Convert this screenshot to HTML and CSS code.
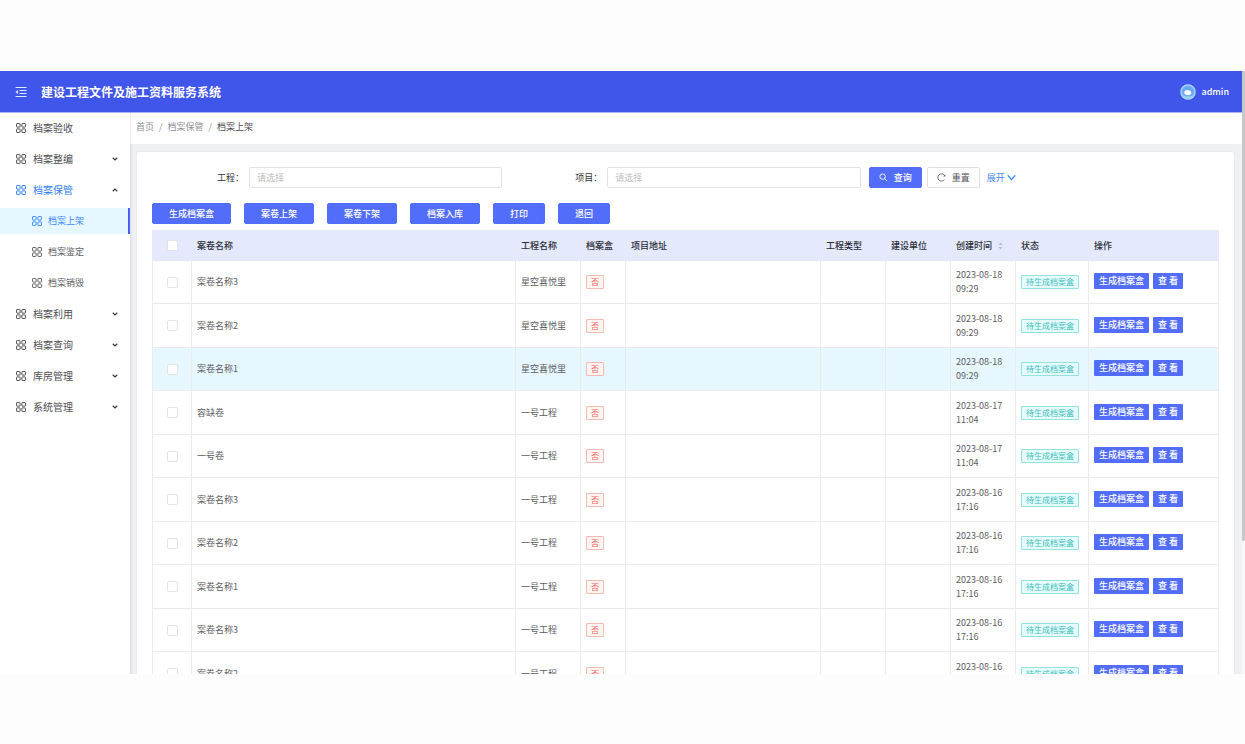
FILE: index.html
```html
<!DOCTYPE html>
<html lang="zh-CN">
<head>
<meta charset="utf-8">
<meta name="viewport" content="width=device-width, initial-scale=1">
<title>建设工程文件及施工资料服务系统</title>
<link rel="stylesheet" href="styles.css">
</head>
<body>
<svg class="defs" aria-hidden="true">
  <symbol id="grid" viewBox="0 0 18 18"><g fill="none" stroke="currentColor" stroke-width="1.8"><rect x="1" y="1" width="6.4" height="6.4" rx="1"/><rect x="10.6" y="1" width="6.4" height="6.4" rx="1"/><rect x="1" y="10.6" width="6.4" height="6.4" rx="1"/><rect x="10.6" y="10.6" width="6.4" height="6.4" rx="1"/></g></symbol>
  <symbol id="chev" viewBox="0 0 12 12"><path d="M1.5 3.5 6 8l4.500-4.500" fill="none" stroke="currentColor" stroke-width="2.200"/></symbol>
</svg>
<div class="app">
  <div class="view">
    <header class="top">
      <button class="fold" type="button" aria-label="收起菜单"><svg viewBox="0 0 24 24"><path d="M1 3h22M9 9h14M9 15h14M1 21h22" fill="none" stroke="currentColor" stroke-width="2"/><path d="M1 12l5-4v8z" fill="currentColor"/></svg></button>
      <h1 class="brand">建设工程文件及施工资料服务系统</h1>
      <a class="user" href="#"><svg viewBox="0 0 32 32"><circle cx="16" cy="16" r="15.500" fill="#b5dcf8"/><circle cx="16" cy="16" r="13" fill="#6ba9f3"/><path d="M5 22a13 13 0 0 0 22 0c-6 4-16 4-22 0z" fill="#a5dcee"/><path d="M8.500 17c0-3 2.500-5 6-5s8 1.500 8 6c0 3-3 4.500-7 4.500s-7-2-7-5.500z" fill="#fff"/></svg><span>admin</span></a>
    </header>
    <div class="body">
      <nav class="side">
        <a class="item" href="#"><svg class="ico"><use href="#grid"/></svg>档案验收</a>
        <a class="item" href="#"><svg class="ico"><use href="#grid"/></svg>档案整编<svg class="arrow"><use href="#chev"/></svg></a>
        <a class="item open" href="#"><svg class="ico"><use href="#grid"/></svg>档案保管<svg class="arrow up"><use href="#chev"/></svg></a>
        <a class="item sub active" href="#"><svg class="ico"><use href="#grid"/></svg>档案上架</a>
        <a class="item sub" href="#"><svg class="ico"><use href="#grid"/></svg>档案鉴定</a>
        <a class="item sub" href="#"><svg class="ico"><use href="#grid"/></svg>档案销毁</a>
        <a class="item" href="#"><svg class="ico"><use href="#grid"/></svg>档案利用<svg class="arrow"><use href="#chev"/></svg></a>
        <a class="item" href="#"><svg class="ico"><use href="#grid"/></svg>档案查询<svg class="arrow"><use href="#chev"/></svg></a>
        <a class="item" href="#"><svg class="ico"><use href="#grid"/></svg>库房管理<svg class="arrow"><use href="#chev"/></svg></a>
        <a class="item" href="#"><svg class="ico"><use href="#grid"/></svg>系统管理<svg class="arrow"><use href="#chev"/></svg></a>
      </nav>
      <main class="main">
        <div class="crumbs"><a href="#">首页</a><span>/</span><a href="#">档案保管</a><span>/</span><b>档案上架</b></div>
        <section class="card">
          <form class="search">
            <div class="field"><label for="f1">工程：</label><input id="f1" type="text" placeholder="请选择"></div>
            <div class="field"><label for="f2">项目：</label><input id="f2" type="text" placeholder="请选择"></div>
            <div class="ops">
              <button class="btn primary" type="button"><svg viewBox="0 0 20 20"><path d="M12.500 12.500 18 18" stroke="currentColor" stroke-width="2"/><circle cx="8" cy="8" r="6" fill="none" stroke="currentColor" stroke-width="2"/></svg>查询</button>
              <button class="btn plain" type="button"><svg viewBox="0 0 20 20"><path d="M16.500 14.500A8 8 0 1 1 16.500 5.500" fill="none" stroke="currentColor" stroke-width="1.800"/><path d="M18.500 2.500v5h-5z" fill="currentColor"/></svg>重置</button>
              <a class="more" href="#">展开<svg viewBox="0 0 18 18"><path d="M1.500 4.500 9 13l7.500-8.500" fill="none" stroke="currentColor" stroke-width="2.400"/></svg></a>
            </div>
          </form>
          <div class="actions">
            <button class="btn primary" type="button">生成档案盒</button>
            <button class="btn primary" type="button">案卷上架</button>
            <button class="btn primary" type="button">案卷下架</button>
            <button class="btn primary" type="button">档案入库</button>
            <button class="btn primary" type="button">打印</button>
            <button class="btn primary" type="button">退回</button>
          </div>
          <table class="list">
            <colgroup><col class="w-check"><col><col class="w-m"><col class="w-box"><col class="w-addr"><col class="w-m"><col class="w-m"><col class="w-m"><col class="w-state"><col class="w-ops"></colgroup>
            <thead><tr><th class="ck"><input type="checkbox" aria-label="全选"></th><th>案卷名称</th><th>工程名称</th><th>档案盒</th><th>项目地址</th><th>工程类型</th><th>建设单位</th><th>创建时间<svg class="sort" viewBox="0 0 10 16"><path d="M5 1l4 5H1zM5 15l4-5H1z" fill="#b9bcc8"/></svg></th><th>状态</th><th>操作</th></tr></thead>
            <tbody>
              <tr><td class="ck"><input type="checkbox" aria-label="选择"></td><td>案卷名称3</td><td>星空喜悦里</td><td><span class="tag no">否</span></td><td></td><td></td><td></td><td>2023-08-18 09:29</td><td><span class="tag wait">待生成档案盒</span></td><td><div class="rowops"><button type="button">生成档案盒</button><button type="button">查 看</button></div></td></tr>
              <tr><td class="ck"><input type="checkbox" aria-label="选择"></td><td>案卷名称2</td><td>星空喜悦里</td><td><span class="tag no">否</span></td><td></td><td></td><td></td><td>2023-08-18 09:29</td><td><span class="tag wait">待生成档案盒</span></td><td><div class="rowops"><button type="button">生成档案盒</button><button type="button">查 看</button></div></td></tr>
              <tr class="hover"><td class="ck"><input type="checkbox" aria-label="选择"></td><td>案卷名称1</td><td>星空喜悦里</td><td><span class="tag no">否</span></td><td></td><td></td><td></td><td>2023-08-18 09:29</td><td><span class="tag wait">待生成档案盒</span></td><td><div class="rowops"><button type="button">生成档案盒</button><button type="button">查 看</button></div></td></tr>
              <tr><td class="ck"><input type="checkbox" aria-label="选择"></td><td>容缺卷</td><td>一号工程</td><td><span class="tag no">否</span></td><td></td><td></td><td></td><td>2023-08-17 11:04</td><td><span class="tag wait">待生成档案盒</span></td><td><div class="rowops"><button type="button">生成档案盒</button><button type="button">查 看</button></div></td></tr>
              <tr><td class="ck"><input type="checkbox" aria-label="选择"></td><td>一号卷</td><td>一号工程</td><td><span class="tag no">否</span></td><td></td><td></td><td></td><td>2023-08-17 11:04</td><td><span class="tag wait">待生成档案盒</span></td><td><div class="rowops"><button type="button">生成档案盒</button><button type="button">查 看</button></div></td></tr>
              <tr><td class="ck"><input type="checkbox" aria-label="选择"></td><td>案卷名称3</td><td>一号工程</td><td><span class="tag no">否</span></td><td></td><td></td><td></td><td>2023-08-16 17:16</td><td><span class="tag wait">待生成档案盒</span></td><td><div class="rowops"><button type="button">生成档案盒</button><button type="button">查 看</button></div></td></tr>
              <tr><td class="ck"><input type="checkbox" aria-label="选择"></td><td>案卷名称2</td><td>一号工程</td><td><span class="tag no">否</span></td><td></td><td></td><td></td><td>2023-08-16 17:16</td><td><span class="tag wait">待生成档案盒</span></td><td><div class="rowops"><button type="button">生成档案盒</button><button type="button">查 看</button></div></td></tr>
              <tr><td class="ck"><input type="checkbox" aria-label="选择"></td><td>案卷名称1</td><td>一号工程</td><td><span class="tag no">否</span></td><td></td><td></td><td></td><td>2023-08-16 17:16</td><td><span class="tag wait">待生成档案盒</span></td><td><div class="rowops"><button type="button">生成档案盒</button><button type="button">查 看</button></div></td></tr>
              <tr><td class="ck"><input type="checkbox" aria-label="选择"></td><td>案卷名称3</td><td>一号工程</td><td><span class="tag no">否</span></td><td></td><td></td><td></td><td>2023-08-16 17:16</td><td><span class="tag wait">待生成档案盒</span></td><td><div class="rowops"><button type="button">生成档案盒</button><button type="button">查 看</button></div></td></tr>
              <tr><td class="ck"><input type="checkbox" aria-label="选择"></td><td>案卷名称2</td><td>一号工程</td><td><span class="tag no">否</span></td><td></td><td></td><td></td><td>2023-08-16 17:16</td><td><span class="tag wait">待生成档案盒</span></td><td><div class="rowops"><button type="button">生成档案盒</button><button type="button">查 看</button></div></td></tr>
            </tbody>
          </table>
        </section>
      </main>
    </div>
  </div>
  <div class="track"><div class="thumb"></div></div>
</div>
</body>
</html>
```
FILE: styles.css
```css
* { box-sizing: border-box; }
body {
  margin: 0;
  height: 100vh;
  padding: 71px 0 70px;
  background: #fdfdfd;
  color: #5c5d62;
  font: 9px/14px "Noto Sans CJK SC", "Noto Sans", sans-serif;
}
a { color: inherit; text-decoration: none; }
button, input { font: inherit; }
svg { flex: none; }
.defs { display: none; }

.app { display: flex; height: 100%; overflow: hidden; background: #fff; }
.view { flex: 1; min-width: 0; display: flex; flex-direction: column; }
.track { width: 3px; background: #f7f7f7; }
.thumb { height: 78%; background: #c6c7c9; border-radius: 0 0 2px 2px; }

.top {
  flex: none;
  height: 41px;
  display: flex;
  align-items: center;
  padding: 1px 13px 0 15px;
  background: #4055ea;
  box-shadow: 0 1px 0 #a9b4f6;
  color: #fff;
  z-index: 1;
}
.fold { display: flex; padding: 0; border: 0; background: none; color: #e6eaff; }
.fold svg { width: 12px; height: 12px; }
.brand { margin: 0 auto 0 14px; font-size: 12px; line-height: 18px; font-weight: 700; }
.user { display: flex; align-items: center; gap: 5px; font-weight: 500; }
.user svg { width: 16px; height: 16px; }

.body { flex: 1; min-height: 0; display: flex; }
.side {
  flex: none;
  width: 130px;
  display: flex;
  flex-direction: column;
  gap: 5px;
  padding-top: 3px;
  background: #fff;
}
.item { display: flex; align-items: center; gap: 7px; height: 26px; padding: 0 12px 0 16px; font-size: 10px; color: #4c4d52; }
.ico { width: 10px; height: 10px; }
.arrow { width: 6px; height: 6px; margin-left: auto; color: #333; }
.up { transform: rotate(180deg); }
.open { color: #2f80f5; }
.open .arrow { color: #333; }
.sub { gap: 6px; padding-left: 32px; font-size: 9px; color: #606166; }
.active { background: #e6f7ff; color: #3f8bf8; border-right: 2px solid #4a5ff0; }

.main { flex: 1; min-width: 0; overflow: hidden; background: #eff1f5; box-shadow: inset 2px 0 2px #e2e4e9; }
.crumbs { display: flex; gap: 5px; height: 32px; padding: 8px 5px; background: #fff; border-left: 1px solid #f0f1f3; color: #8f9095; }
.crumbs b { font-weight: 400; color: #4c4d52; }
.card { margin: 7px 7px 0 6px; padding: 15px 15px 0; background: #fff; border: 1px solid #eaebee; border-radius: 3px; }

.search { display: grid; grid-template-columns: repeat(3, 1fr); gap: 8px; }
.field { display: flex; align-items: center; }
.field label { flex: none; width: 97px; padding-right: 5px; text-align: right; color: #333; }
.field input {
  flex: 1;
  min-width: 0;
  height: 21px;
  padding: 0 7px;
  border: 1px solid #e2e2e4;
  border-radius: 2px;
  background: #fff;
  outline: 0;
}
.field input::placeholder { color: #bdbdc0; opacity: 1; }
.ops { display: flex; align-items: center; gap: 5px; }
.btn { display: flex; align-items: center; justify-content: center; gap: 6px; height: 21px; border-radius: 2px; border: 1px solid #526dfa; white-space: nowrap; }
.btn svg { width: 9px; height: 9px; }
.primary { background: #526dfa; color: #fff; font-weight: 500; }
.plain { background: #fff; border-color: #dedfe2; color: #55565b; }
.ops .btn { padding: 0 9px; }
.more { display: flex; align-items: center; gap: 2px; padding-left: 2px; color: #3f8bf8; }
.more svg { width: 9px; height: 9px; }
.actions { display: flex; gap: 13px; margin: 15px 0 6px; }
.actions .btn { padding: 0 16px; }

.list { width: 100%; table-layout: fixed; border-collapse: collapse; }
.w-check { width: 39px; }
.w-m { width: 65px; }
.w-box { width: 45px; }
.w-addr { width: 195px; }
.w-state { width: 73px; }
.w-ops { width: 130px; }
.list th, .list td { padding: 0 5px; border: 1px solid #ebebee; text-align: left; vertical-align: middle; }
.list th { height: 30px; background: #e4e9fe; border-color: #e8eaf3; color: #2d2e38; font-weight: 500; white-space: nowrap; }
.list td { height: 43px; }
.list tr:nth-child(even) td { height: 44px; }
.hover td { background: #e6f7ff; }
.list .ck { padding: 0; text-align: center; }
.ck input { appearance: none; display: block; width: 11px; height: 11px; margin: 0 auto; border: 1px solid #e3e3e5; border-radius: 2px; background: #fff; }
.sort { width: 5px; height: 8px; margin-left: 6px; vertical-align: middle; }
.tag { display: block; width: fit-content; padding: 0 4px; border: 1px solid; border-radius: 1px; font-size: 8px; line-height: 12px; white-space: nowrap; }
.no { color: #f5625f; background: #fdf5f2; border-color: #fab9ae; }
.wait { color: #3dbfbc; background: #e6fbfb; border-color: #94e2df; }
.rowops { display: flex; gap: 4px; padding-bottom: 2px; }
.rowops button { height: 16px; padding: 0 5px; border: 0; border-radius: 1px; background: #526dfa; color: #fff; font-weight: 500; line-height: 16px; white-space: nowrap; }
```
